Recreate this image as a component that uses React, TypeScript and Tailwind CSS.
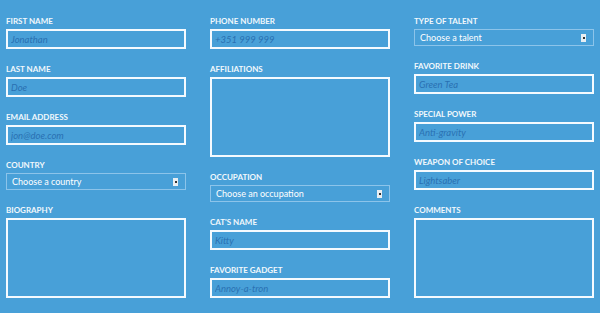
import React from "react";

type Field =
  | { kind: "input"; label: string; placeholder: string }
  | { kind: "select"; label: string; value: string }
  | { kind: "textarea"; label: string };

const col1: Field[] = [
  { kind: "input", label: "First Name", placeholder: "Jonathan" },
  { kind: "input", label: "Last Name", placeholder: "Doe" },
  { kind: "input", label: "Email Address", placeholder: "jon@doe.com" },
  { kind: "select", label: "Country", value: "Choose a country" },
  { kind: "textarea", label: "Biography" },
];

const col2: Field[] = [
  { kind: "input", label: "Phone Number", placeholder: "+351 999 999" },
  { kind: "textarea", label: "Affiliations" },
  { kind: "select", label: "Occupation", value: "Choose an occupation" },
  { kind: "input", label: "Cat's Name", placeholder: "Kitty" },
  { kind: "input", label: "Favorite Gadget", placeholder: "Annoy-a-tron" },
];

const col3: Field[] = [
  { kind: "select", label: "Type of Talent", value: "Choose a talent" },
  { kind: "input", label: "Favorite Drink", placeholder: "Green Tea" },
  { kind: "input", label: "Special Power", placeholder: "Anti-gravity" },
  { kind: "input", label: "Weapon of Choice", placeholder: "Lightsaber" },
  { kind: "textarea", label: "Comments" },
];

function FieldView({ f }: { f: Field }) {
  return (
    <div className="flex flex-col mb-[15px]">
      <label className="block text-[8px] leading-[10px] font-bold uppercase text-[#f2f8fc] mb-[3px]">
        {f.label}
      </label>
      {f.kind === "input" && (
        <input
          className="h-[20px] w-full border-2 border-[#f4faff] bg-transparent pl-[3px] text-[9.5px] italic text-[#2a70b2] outline-none placeholder:text-[#2a70b2] placeholder:italic"
          placeholder={f.placeholder}
        />
      )}
      {f.kind === "textarea" && (
        <textarea className="h-[80px] w-full resize-none border-2 border-[#f4faff] bg-transparent outline-none" />
      )}
      {f.kind === "select" && (
        <div className="flex h-[17px] w-full items-center justify-between border border-[#8cc4ea] pl-[5px] pr-[7px]">
          <span className="text-[9px] leading-[11px] text-white">{f.value}</span>
          <span className="flex h-[8px] w-[5px] items-center justify-center bg-[#e8eef2]">
            <span className="h-[2px] w-[2px] bg-[#333]" />
          </span>
        </div>
      )}
    </div>
  );
}

export default function App() {
  const cols = [col1, col2, col3];
  return (
    <div
      className="h-[313px] w-[600px] overflow-hidden bg-[#48a0d8] pl-[6px] pt-[16px]"
      style={{ fontFamily: "Lato, 'Open Sans', sans-serif" }}
    >
      <div className="grid grid-cols-[180px_180px_180px] gap-x-[24px]">
        {cols.map((c, i) => (
          <div key={i} className="flex flex-col">
            {c.map((f) => (
              <FieldView key={f.label} f={f} />
            ))}
          </div>
        ))}
      </div>
    </div>
  );
}
